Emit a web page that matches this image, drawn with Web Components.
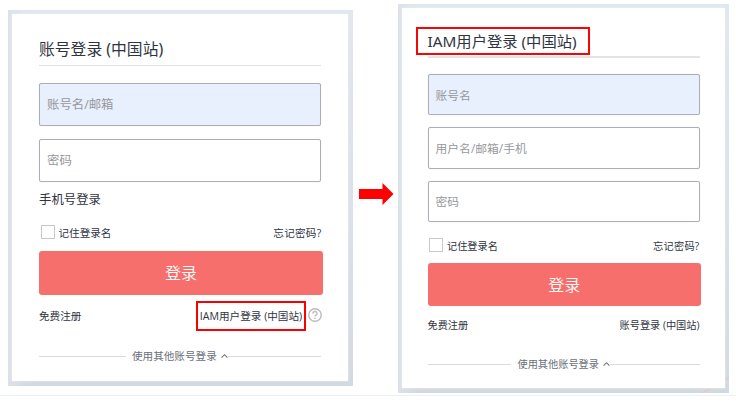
<!DOCTYPE html>
<html lang="zh-CN">
<head>
<meta charset="utf-8">
<title>登录</title>
<style>
html,body{margin:0;height:409px;overflow:hidden;background:#fff}
body{font-family:"Open Sans","Noto Sans CJK SC",sans-serif;color:#30343f}
.left{--fs:10.6px;--field:12.4px;--label:12.4px;--title:15.8px;--end:-.5px}
.right{--fs:10.2px;--field:11.8px;--title:15.3px;--end:.5px}
.left login-divider{--first:87px;--gap:6px}
.right login-divider{--first:83px;--gap:7px}
.right{--streak:linear-gradient(150deg,transparent 49%,#e0ccd3 50%,#e0ccd3 57%,transparent 58%) right bottom/28px 17px no-repeat,}
</style>
</head>
<body>
<login-stage>
  <login-panel class="left" style="width:345px;height:376px;margin-top:10px;--pad:4px 5px 5px 4px;--inset:0 27px">
    <login-title style="height:52px;--shift:16px;--line:1px">账号登录 (中国站)</login-title>
    <login-field filled style="height:43px;margin-top:17px">账号名/邮箱</login-field>
    <login-field style="height:43px;margin-top:13px">密码</login-field>
    <login-row style="height:34px;font-size:var(--label);padding-bottom:0"><span>手机号登录</span></login-row>
    <login-row style="height:34px;"><login-check>记住登录名</login-check><span slot="end" style="letter-spacing:.25px">忘记密码?</span></login-row>
    <login-button style="height:44px;margin-top:1px;margin-right:-2px">登录</login-button>
    <login-row style="height:42px"><span>免费注册</span><login-mark slot="end" style="width:110px;height:30px">IAM用户登录 (中国站)</login-mark><help-icon slot="end"></help-icon></login-row>
    <login-divider style="height:38px">使用其他账号登录</login-divider>
  </login-panel>
  <step-arrow></step-arrow>
  <login-panel class="right" style="width:331px;height:389px;margin-top:4px;--pad:4px 4px 5px 4px;--inset:0 25px 0 25.5px">
    <login-title marked style="height:50px;--shift:14px;--line:2px">IAM用户登录 (中国站)</login-title>
    <login-field filled style="height:41px;margin-top:16px">账号名</login-field>
    <login-field style="height:42px;margin-top:12px">用户名/邮箱/手机</login-field>
    <login-field style="height:41px;margin-top:12px;padding-bottom:2px">密码</login-field>
    <login-row style="height:32px;margin-top:8px"><login-check>记住登录名</login-check><span slot="end" style="letter-spacing:.25px">忘记密码?</span></login-row>
    <login-button style="height:43px;margin-top:1px;margin-right:-1px">登录</login-button>
    <login-row style="height:39px"><span>免费注册</span><span slot="end">账号登录 (中国站)</span></login-row>
    <login-divider style="height:38px">使用其他账号登录</login-divider>
  </login-panel>
</login-stage>
<script>
const define=(name,html)=>{
  const t=document.createElement('template');
  t.innerHTML=html;
  customElements.define(name,class extends HTMLElement{
    constructor(){super();this.attachShadow({mode:'open'}).append(t.content.cloneNode(true));}
  });
};
define('login-stage',`<style>
:host{display:flex;align-items:flex-start;box-sizing:border-box;height:396px;padding-left:8px;border-bottom:1px solid #eaf1f8}
</style><slot></slot>`);
define('login-panel',`<style>
:host{display:block;flex:none;box-sizing:border-box;padding:var(--pad);background:var(--streak,) linear-gradient(90deg,#dde2ea,transparent 20px),linear-gradient(180deg,#e1e7ef 0,#dae1ea 55%,#d3d9e0 100%)}
.card{box-sizing:border-box;height:100%;padding:var(--inset);background:#fff;box-shadow:0 0 2px #edf0f4}
</style><div class="card"><slot></slot></div>`);
define('login-title',`<style>
:host{display:block;box-sizing:border-box;border-bottom:var(--line) solid #e2e3e5;font-size:var(--title);white-space:nowrap;padding-top:calc(var(--shift) + 8px);line-height:22px;font-family:"Noto Sans","Noto Sans CJK SC",sans-serif}
.text{display:inline-block;position:relative}
:host([marked]) .text::after{content:"";position:absolute;box-sizing:border-box;left:-11.5px;top:-3px;width:174px;height:28px;border:2px solid #f80606}
</style><span class="text"><slot></slot></span>`);
define('login-field',`<style>
:host{display:flex;align-items:center;box-sizing:border-box;border:1px solid #acafb7;border-radius:2px;padding:0 0 1px 7px;color:#97989b;font-size:var(--field);box-shadow:0 0 1px #d5d7dc}
:host([filled]){background:#e8effd}
</style><span><slot></slot></span>`);
define('login-row',`<style>
:host{display:flex;align-items:center;justify-content:space-between;font-size:var(--fs);white-space:nowrap;box-sizing:border-box;padding-bottom:2px}
.end{display:flex;align-items:center;gap:1.5px;margin-right:var(--end)}
</style><slot></slot><div class="end"><slot name="end"></slot></div>`);
define('login-check',`<style>
:host{display:flex;align-items:center;gap:4px;padding-left:1.5px}
i{box-sizing:border-box;width:14px;height:14px;border:1px solid #c8c9cc;background:#fff}
</style><i></i><span><slot></slot></span>`);
define('login-button',`<style>
:host{display:flex;align-items:center;justify-content:center;box-sizing:border-box;padding-bottom:2px;background:#f76f6c;border-radius:3px;color:#fff;font-size:16px;font-weight:350}
</style><span><slot></slot></span>`);
define('login-mark',`<style>
:host{display:flex;align-items:center;justify-content:center;box-sizing:border-box;border:2px solid #fb0000;white-space:nowrap;margin-top:2px;padding-bottom:2px}
</style><span><slot></slot></span>`);
define('help-icon',`<style>
:host{display:block;width:14px;height:14px}svg{display:block}
</style><svg width="14" height="14" viewBox="0 0 14 14" fill="none" stroke="#bcbcbc" stroke-width="1.4"><circle cx="7" cy="7" r="6.2"/><path d="M4.9 5.5C4.9 2.8 9.1 2.8 9.1 5.4C9.1 7 7 6.9 7 8.6"/><path d="M7 9.7V11"/></svg>`);
define('login-divider',`<style>
:host{display:flex;align-items:center;font-size:var(--fs);color:#6b707a;white-space:nowrap}
i{height:1px;background:#d9dcdf}.a{width:var(--first);margin-right:var(--gap)}.b{flex:1}
span{margin-top:-1.5px}
svg{display:block;margin-left:4px}
</style><i class="a"></i><span><slot></slot></span><svg width="7" height="6" viewBox="0 0 7 6" fill="none" stroke="#70747d" stroke-width="1.1"><path d="M.6 4.6L3.5 1.7L6.4 4.6"/></svg><i class="b"></i>`);
define('step-arrow',`<style>
:host{display:block;flex:none;width:35px;height:22px;margin:183px 4px 0 6px}svg{display:block}
</style><svg width="35" height="22" viewBox="0 0 35 22"><path fill="#f00" d="M0 6H23.5V0L34.5 11L23.5 22V16H0Z"/></svg>`);
</script>
</body>
</html>
